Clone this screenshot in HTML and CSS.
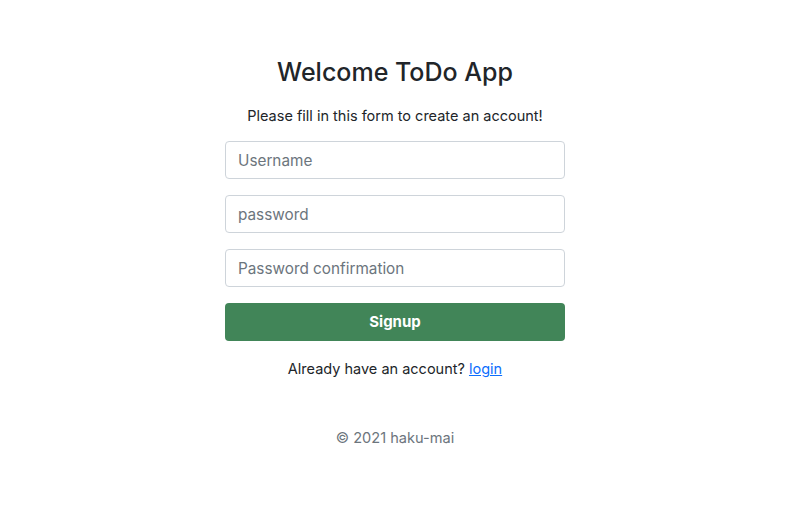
FILE: index.html
```html
<!DOCTYPE html>
<html lang="en">
<head>
<meta charset="utf-8">
<title>Welcome ToDo App</title>
<link rel="stylesheet" href="styles.css">
</head>
<body>
<main class="signup">
  <h3 class="title">Welcome ToDo App</h3>
  <p class="lead-text">Please fill in this form to create an account!</p>
  <form class="form">
    <input class="field" type="text" placeholder="Username">
    <input class="field" type="password" placeholder="password">
    <input class="field" type="password" placeholder="Password confirmation">
    <button class="btn" type="button">Signup</button>
  </form>
  <p class="login-text">Already have an account? <a href="#" class="link">login</a></p>
  <p class="footer">© 2021 haku-mai</p>
</main>
</body>
</html>
```
FILE: styles.css
```css
* { box-sizing: border-box; }
html, body { margin: 0; padding: 0; background: #fff; }
body {
  font-family: Inter, "Noto Sans", "Liberation Sans", sans-serif;
  color: #212529;
  font-size: 15px;
  line-height: 24px;
  padding-right: 7px;
}
.signup {
  width: 340px;
  margin: 0 auto;
  padding-top: 55px;
  text-align: center;
}
.title {
  margin: 0;
  font-size: 25px;
  font-weight: 500;
  line-height: 34px;
}
.lead-text {
  margin: 15px 0 13px;
  font-size: 14.5px;
  line-height: 24px;
}
.form {
  display: flex;
  flex-direction: column;
  gap: 16px;
}
.field {
  display: block;
  width: 100%;
  height: 38px;
  padding: 6px 12px;
  font: inherit;
  font-size: 15.3px;
  color: #212529;
  border: 1px solid #ced4da;
  border-radius: 4px;
  background: #fff;
}
.field::placeholder { color: #6c757d; }
.btn {
  height: 38px;
  width: 100%;
  border: 0;
  border-radius: 4px;
  background: #418558;
  color: #fff;
  font: inherit;
  font-weight: 700;
  font-size: 15px;
}
.login-text {
  margin: 16px 0 0;
  font-size: 14.5px;
}
.link { color: #0d6efd; }
.footer {
  margin: 45px 0 0;
  font-size: 14.6px;
  color: #6c757d;
}
```
